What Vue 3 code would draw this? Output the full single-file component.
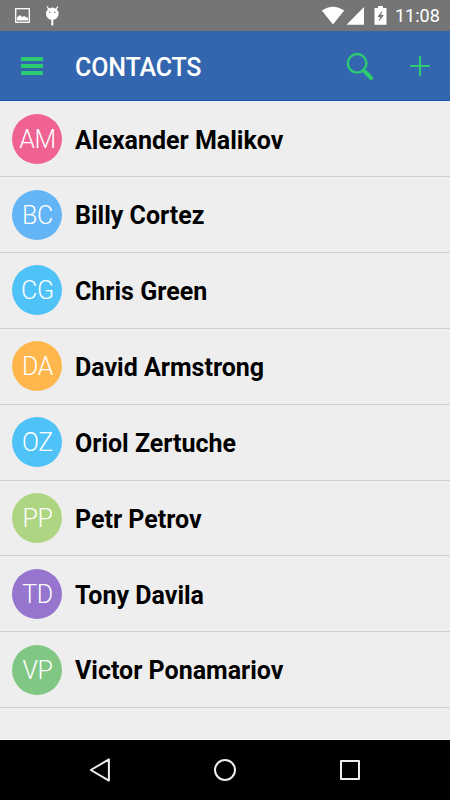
<template>
  <div class="screen">
    <!-- Android status bar -->
    <div class="status-bar">
      <svg class="status-icons" width="100" height="31" viewBox="0 0 100 31">
        <rect x="15.7" y="8.7" width="13.6" height="13.6" fill="none" stroke="#fff" stroke-width="1.3" />
        <path d="M17 20.5v-3l3-2.5 2 2 2-1 4 2v2.5z" fill="#fff" />
        <ellipse cx="52.3" cy="13.8" rx="6.3" ry="6.2" fill="#fff" />
        <path d="M47 6.5l2.5 4M57.8 6.5l-2.5 4" stroke="#fff" stroke-width="1.3" />
        <path d="M52.3 20v5.5" stroke="#fff" stroke-width="2" />
        <circle cx="49.8" cy="12.3" r="0.8" fill="#757575" />
        <circle cx="54.8" cy="12.3" r="0.8" fill="#757575" />
      </svg>
      <div class="status-right">
        <svg width="70" height="31" viewBox="0 0 70 31">
          <path d="M1.8 10.6Q13 2.7 24.2 10.6L13 24.5z" fill="#fff" />
          <path d="M44 7v17.7H26.5z" fill="#fff" />
          <path d="M58 6h5v2h3.5v16.7h-12V8H58z" fill="#fff" />
          <path d="M62.5 10.5l-5.2 6.4h2.8l-1.5 5 5.3-7h-2.8z" fill="#757575" />
        </svg>
        <span class="clock">11:08</span>
      </div>
    </div>

    <header class="toolbar">
      <svg class="menu-icon" width="22" height="18" viewBox="0 0 22 18">
        <rect width="22" height="4" rx="0.7" />
        <rect y="7" width="22" height="4" rx="0.7" />
        <rect y="14" width="22" height="4" rx="0.7" />
      </svg>
      <h1>CONTACTS</h1>
      <svg class="search-icon" width="28" height="28" viewBox="0 0 28 28">
        <circle cx="11.1" cy="11.3" r="9.3" stroke-width="2.4" />
        <path d="M17.2 18l2 1.5" stroke-width="2.5" />
        <path d="M19.3 20l5.8 6" stroke-width="4" />
      </svg>
      <svg class="add-icon" width="20" height="20" viewBox="0 0 20 20">
        <path d="M1 10h18M10 1v18" stroke-width="2.1" />
      </svg>
    </header>

    <ul class="contacts">
      <li v-for="contact in contacts" :key="contact.name" class="contact">
        <div class="avatar" :style="{ backgroundColor: contact.color }">{{ contact.initials }}</div>
        <span class="name">{{ contact.name }}</span>
      </li>
    </ul>

    <!-- Android navigation bar -->
    <nav class="nav-bar">
      <svg width="24" height="26" viewBox="0 0 24 26">
        <path d="M20.9 2.4v21.2L2.8 13z" />
      </svg>
      <svg width="24" height="26" viewBox="0 0 24 26">
        <circle cx="12" cy="13" r="10" />
      </svg>
      <svg width="24" height="26" viewBox="0 0 24 26">
        <rect x="3" y="4" width="18" height="18" />
      </svg>
    </nav>
  </div>
</template>

<script setup>
const contacts = [
  { initials: 'AM', name: 'Alexander Malikov', color: '#f06292' },
  { initials: 'BC', name: 'Billy Cortez', color: '#64b5f6' },
  { initials: 'CG', name: 'Chris Green', color: '#4fc3f7' },
  { initials: 'DA', name: 'David Armstrong', color: '#ffb74d' },
  { initials: 'OZ', name: 'Oriol Zertuche', color: '#4fc3f7' },
  { initials: 'PP', name: 'Petr Petrov', color: '#aed581' },
  { initials: 'TD', name: 'Tony Davila', color: '#9575cd' },
  { initials: 'VP', name: 'Victor Ponamariov', color: '#81c784' }
];
</script>

<style>
body {
  margin: 0;
  background-color: #eee;
}
</style>

<style scoped>
.screen {
  display: flex;
  flex-direction: column;
  width: 450px;
  height: 800px;
  overflow: hidden;
  background-color: #eee;
  font-family: Roboto, sans-serif;
}

.status-bar {
  display: flex;
  justify-content: space-between;
  flex: none;
  height: 31px;
  background-color: #757575;
}

.status-right {
  display: flex;
  width: 130px;
}

.status-right svg {
  flex: none;
}

.clock {
  margin-left: 5px;
  color: #fff;
  font-size: 18px;
  line-height: 32px;
}

.toolbar {
  display: flex;
  align-items: center;
  flex: none;
  box-sizing: border-box;
  height: 70px;
  padding: 0 20px 0 21px;
  background-color: #3366ae;
  border-bottom: 1px solid #0a56ac;
}

.menu-icon {
  fill: #2ecc71;
}

.toolbar h1 {
  flex: 1;
  margin: 4px 0 0 32px;
  color: #fff;
  font-size: 25px;
  font-weight: 500;
  letter-spacing: -0.15px;
}

.search-icon,
.add-icon {
  fill: none;
  stroke: #2ecc71;
  stroke-linecap: round;
}

.add-icon {
  margin-left: 36px;
}

.contacts {
  flex: 1;
  margin: 0;
  padding: 0.4px 0 0;
  list-style: none;
}

.contact {
  display: flex;
  align-items: center;
  box-sizing: border-box;
  height: 75.83px;
  padding-left: 12.4px;
  border-bottom: 1px solid #d0d0d0;
}

.avatar {
  width: 50px;
  height: 50px;
  margin-right: 12.6px;
  border-radius: 50%;
  color: #fff;
  font-size: 25px;
  font-weight: 300;
  letter-spacing: -0.4px;
  line-height: 51px;
  text-align: center;
}

.name {
  margin-top: 3.6px;
  color: #000;
  font-size: 25px;
  font-weight: 700;
  line-height: 30px;
}

.nav-bar {
  display: flex;
  align-items: center;
  justify-content: center;
  gap: 101px;
  flex: none;
  box-sizing: border-box;
  height: 61px;
  background-color: #000;
  border-top: 1px solid #fafafa;
}

.nav-bar svg {
  fill: none;
  stroke: #eee;
  stroke-width: 2;
  stroke-linejoin: round;
}
</style>
